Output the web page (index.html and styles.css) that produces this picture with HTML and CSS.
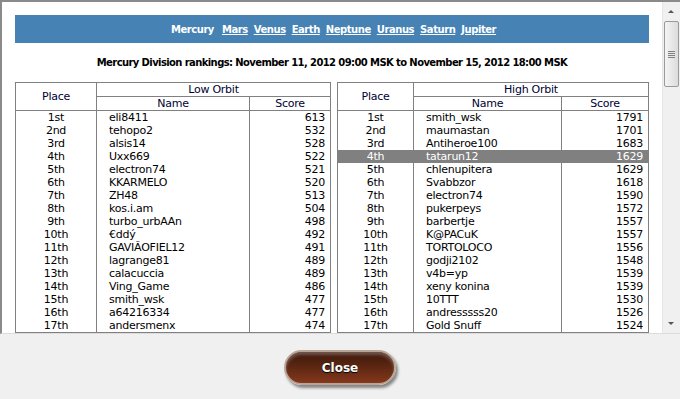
FILE: index.html
```html
<!DOCTYPE html>
<html>
<head>
<meta charset="utf-8">
<link rel="stylesheet" href="styles.css">
</head>
<body>
<div class="frame">
  <div class="content">
    <div class="nav">
      <span class="current">Mercury</span>
      <a href="#">Mars</a>
      <a href="#">Venus</a>
      <a href="#">Earth</a>
      <a href="#">Neptune</a>
      <a href="#">Uranus</a>
      <a href="#">Saturn</a>
      <a href="#">Jupiter</a>
    </div>
    <div class="title">Mercury Division rankings: November 11, 2012 09:00 MSK to November 15, 2012 18:00 MSK</div>
    <div class="tables">
      <table class="rank left">
        <colgroup><col class="c-place"><col class="c-name"><col class="c-score"></colgroup>
        <thead>
          <tr><th rowspan="2" class="h-place">Place</th><th colspan="2">Low Orbit</th></tr>
          <tr><th>Name</th><th>Score</th></tr>
        </thead>
        <tbody>
          <tr><td class="place">1st</td><td class="name">eli8411</td><td class="score">613</td></tr>
          <tr><td class="place">2nd</td><td class="name">tehopo2</td><td class="score">532</td></tr>
          <tr><td class="place">3rd</td><td class="name">alsis14</td><td class="score">528</td></tr>
          <tr><td class="place">4th</td><td class="name">Uxx669</td><td class="score">522</td></tr>
          <tr><td class="place">5th</td><td class="name">electron74</td><td class="score">521</td></tr>
          <tr><td class="place">6th</td><td class="name">KKARMELO</td><td class="score">520</td></tr>
          <tr><td class="place">7th</td><td class="name">ZH48</td><td class="score">513</td></tr>
          <tr><td class="place">8th</td><td class="name">kos.i.am</td><td class="score">504</td></tr>
          <tr><td class="place">9th</td><td class="name">turbo_urbAAn</td><td class="score">498</td></tr>
          <tr><td class="place">10th</td><td class="name">€ddý</td><td class="score">492</td></tr>
          <tr><td class="place">11th</td><td class="name">GAVIÃOFIEL12</td><td class="score">491</td></tr>
          <tr><td class="place">12th</td><td class="name">lagrange81</td><td class="score">489</td></tr>
          <tr><td class="place">13th</td><td class="name">calacuccia</td><td class="score">489</td></tr>
          <tr><td class="place">14th</td><td class="name">Ving_Game</td><td class="score">486</td></tr>
          <tr><td class="place">15th</td><td class="name">smith_wsk</td><td class="score">477</td></tr>
          <tr><td class="place">16th</td><td class="name">a64216334</td><td class="score">477</td></tr>
          <tr><td class="place">17th</td><td class="name">andersmenx</td><td class="score">474</td></tr>
        </tbody>
      </table>
      <table class="rank right">
        <colgroup><col class="c-place"><col class="c-name"><col class="c-score"></colgroup>
        <thead>
          <tr><th rowspan="2" class="h-place">Place</th><th colspan="2">High Orbit</th></tr>
          <tr><th>Name</th><th>Score</th></tr>
        </thead>
        <tbody>
          <tr><td class="place">1st</td><td class="name">smith_wsk</td><td class="score">1791</td></tr>
          <tr><td class="place">2nd</td><td class="name">maumastan</td><td class="score">1701</td></tr>
          <tr><td class="place">3rd</td><td class="name">Antiheroe100</td><td class="score">1683</td></tr>
          <tr class="me"><td class="place">4th</td><td class="name">tatarun12</td><td class="score">1629</td></tr>
          <tr><td class="place">5th</td><td class="name">chlenupitera</td><td class="score">1629</td></tr>
          <tr><td class="place">6th</td><td class="name">Svabbzor</td><td class="score">1618</td></tr>
          <tr><td class="place">7th</td><td class="name">electron74</td><td class="score">1590</td></tr>
          <tr><td class="place">8th</td><td class="name">pukerpeys</td><td class="score">1572</td></tr>
          <tr><td class="place">9th</td><td class="name">barbertje</td><td class="score">1557</td></tr>
          <tr><td class="place">10th</td><td class="name">K@PACuK</td><td class="score">1557</td></tr>
          <tr><td class="place">11th</td><td class="name">TORTOLOCO</td><td class="score">1556</td></tr>
          <tr><td class="place">12th</td><td class="name">godji2102</td><td class="score">1548</td></tr>
          <tr><td class="place">13th</td><td class="name">v4b=yp</td><td class="score">1539</td></tr>
          <tr><td class="place">14th</td><td class="name">xeny konina</td><td class="score">1539</td></tr>
          <tr><td class="place">15th</td><td class="name">10TTT</td><td class="score">1530</td></tr>
          <tr><td class="place">16th</td><td class="name">andresssss20</td><td class="score">1526</td></tr>
          <tr><td class="place">17th</td><td class="name">Gold Snuff</td><td class="score">1524</td></tr>
        </tbody>
      </table>
    </div>
  </div>
  <div class="scrollbar">
    <div class="arrow up"></div>
    <div class="track">
      <div class="thumb"><span class="grip"></span></div>
    </div>
    <div class="arrow down"></div>
  </div>
</div>
<div class="footer">
  <button class="close">Close</button>
</div>
</body>
</html>
```

FILE: styles.css
```css
* { box-sizing: border-box; }
html, body {
  margin: 0;
  padding: 0;
  background: #f0f0f0;
  font-family: "DejaVu Sans", Tahoma, sans-serif;
  font-size: 10px;
  color: #000;
}
.frame {
  display: flex;
  height: 334px;
  border-top: 2px solid #8a8a8a;
  border-left: 2px solid #8a8a8a;
  border-bottom: 1px solid #dcdcdc;
  overflow: hidden;
}
.content {
  flex: 1;
  min-width: 0;
  background: #fff;
  padding: 13px 13px 0 13px;
  overflow: hidden;
}
.nav {
  background: #4682b4;
  height: 28px;
  display: flex;
  justify-content: center;
  align-items: center;
  gap: 6px;
  font-weight: bold;
  letter-spacing: -0.45px;
  color: #fff;
  padding-left: 3px;
}
.nav a {
  color: #fff;
  text-decoration: underline;
}
.nav .current { margin-right: 2px; }
.title {
  text-align: center;
  font-weight: bold;
  letter-spacing: -0.6px;
  margin-top: 13px;
  height: 14px;
  line-height: 14px;
}
.tables {
  display: grid;
  grid-template-columns: 315px 311px;
  column-gap: 7px;
  margin-top: 12px;
}
.rank {
  width: 100%;
  border-collapse: collapse;
  table-layout: fixed;
  border: 1px solid #808080;
  font-size: 11px;
  letter-spacing: -0.25px;
}
.left .c-place { width: 81px; }
.left .c-name { width: 153px; }
.left .c-score { width: 81px; }
.right .c-place { width: 76px; }
.right .c-name { width: 148px; }
.right .c-score { width: 87px; }
.rank th {
  font-weight: normal;
  color: #000033;
  border: 1px solid #808080;
  height: 14px;
  line-height: 12px;
  padding: 0;
  text-align: center;
}
.rank td {
  height: 13px;
  line-height: 13px;
  padding: 0;
  border-left: 1px solid #808080;
  border-right: 1px solid #808080;
  white-space: nowrap;
  overflow: hidden;
}
.rank td.place { text-align: center; }
.rank td.name { padding-left: 12px; }
.rank td.score { text-align: right; padding-right: 5px; }
.rank tr.me td {
  background: #808080;
  color: #fff;
}
.scrollbar {
  flex: none;
  width: 18px;
  background: #f0f0f0;
  border-left: 1px solid #e6e6e6;
  display: flex;
  flex-direction: column;
}
.arrow {
  height: 17px;
  position: relative;
}
.arrow::after {
  content: "";
  position: absolute;
  left: 5px;
  width: 0;
  height: 0;
  border-left: 3px solid transparent;
  border-right: 3px solid transparent;
}
.arrow.up::after { top: 8px; border-bottom: 3px solid #555; }
.arrow.down::after { top: 6px; border-top: 3px solid #555; }
.track {
  flex: 1;
  padding: 2px 1px 0 1px;
}
.thumb {
  height: 66px;
  border: 1px solid #9a9a9a;
  border-radius: 2px;
  background: linear-gradient(to right, #f4f4f4, #dcdcdc);
  display: flex;
  align-items: center;
  justify-content: center;
}
.grip {
  width: 7px;
  height: 7px;
  background: repeating-linear-gradient(to bottom, #808080 0 1px, #e8e8e8 1px 2px);
}
.footer {
  height: 65px;
  display: flex;
  justify-content: center;
  align-items: center;
}
.close {
  width: 112px;
  height: 35px;
  border-radius: 18px;
  border: 2px solid #b9a596;
  background: linear-gradient(to bottom, #3c180c 0%, #5a2612 45%, #86381c 100%);
  box-shadow: 2px 3px 3px rgba(0,0,0,0.45), inset 0 3px 3px rgba(255,255,255,0.25);
  color: #fff;
  font-family: "DejaVu Sans", Tahoma, sans-serif;
  font-weight: bold;
  font-size: 12px;
  text-shadow: 0 1px 1px #000;
  padding: 0;
  margin-top: 2px;
}
```
